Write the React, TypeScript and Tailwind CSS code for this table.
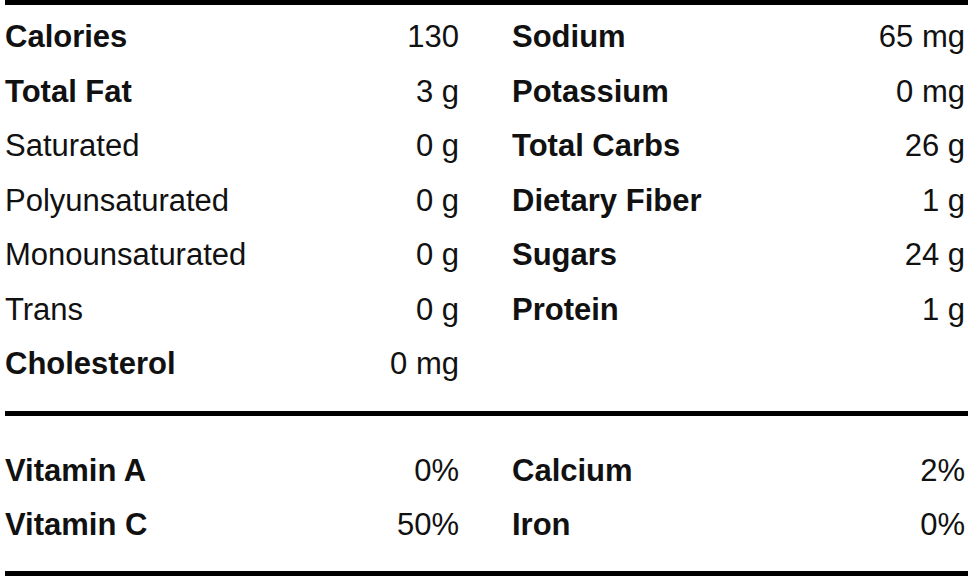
import React from "react";

type Row = { label: string; value: string; bold?: boolean };

const left: Row[] = [
  { label: "Calories", value: "130", bold: true },
  { label: "Total Fat", value: "3 g", bold: true },
  { label: "Saturated", value: "0 g" },
  { label: "Polyunsaturated", value: "0 g" },
  { label: "Monounsaturated", value: "0 g" },
  { label: "Trans", value: "0 g" },
  { label: "Cholesterol", value: "0 mg", bold: true },
];

const right: Row[] = [
  { label: "Sodium", value: "65 mg", bold: true },
  { label: "Potassium", value: "0 mg", bold: true },
  { label: "Total Carbs", value: "26 g", bold: true },
  { label: "Dietary Fiber", value: "1 g", bold: true },
  { label: "Sugars", value: "24 g", bold: true },
  { label: "Protein", value: "1 g", bold: true },
];

const vitLeft: Row[] = [
  { label: "Vitamin A", value: "0%", bold: true },
  { label: "Vitamin C", value: "50%", bold: true },
];
const vitRight: Row[] = [
  { label: "Calcium", value: "2%", bold: true },
  { label: "Iron", value: "0%", bold: true },
];

function Line({ r, h }: { r: Row; h: string }) {
  return (
    <div className={`flex justify-between ${h}`}>
      <span className={r.bold ? "font-bold" : ""}>{r.label}</span>
      <span>{r.value}</span>
    </div>
  );
}

export default function App() {
  return (
    <div
      className="bg-white w-[980px] h-[580px] overflow-hidden text-[#111] text-[31px]"
      style={{ fontFamily: '"Liberation Sans", Arial, sans-serif' }}
    >
      <div className="ml-[5px] w-[963px] border-t-[5px] border-black">
        <div className="pt-[5px] pb-[19px] grid grid-cols-[454px_453px] gap-x-[53px] items-start">
          <div className="flex flex-col">
            {left.map((r) => (
              <Line key={r.label} r={r} h="h-[54.5px] leading-[54.5px]" />
            ))}
          </div>
          <div className="flex flex-col">
            {right.map((r) => (
              <Line key={r.label} r={r} h="h-[54.5px] leading-[54.5px]" />
            ))}
          </div>
        </div>
        <div className="border-t-[5px] border-black pt-[28px] pb-[19px] grid grid-cols-[454px_453px] gap-x-[53px]">
          <div className="flex flex-col">
            {vitLeft.map((r) => (
              <Line key={r.label} r={r} h="h-[54px] leading-[54px]" />
            ))}
          </div>
          <div className="flex flex-col">
            {vitRight.map((r) => (
              <Line key={r.label} r={r} h="h-[54px] leading-[54px]" />
            ))}
          </div>
        </div>
        <div className="border-t-[5px] border-black" />
      </div>
    </div>
  );
}
